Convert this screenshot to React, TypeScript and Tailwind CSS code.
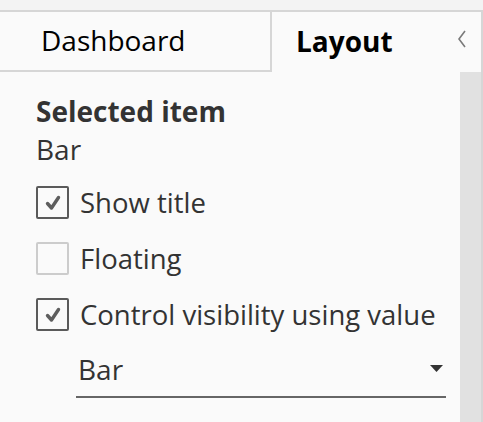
import React, { useState } from 'react'

const Check = ({ checked, onClick }: { checked: boolean; onClick: () => void }) => (
  <button
    onClick={onClick}
    className={`w-[33px] h-[33px] shrink-0 flex items-center justify-center rounded-[2px] border-2 bg-[#fafafa] ${
      checked ? 'border-[#5a5a5a]' : 'border-[#cccccc]'
    }`}
  >
    {checked && (
      <svg width="20" height="20" viewBox="0 0 20 20">
        <path d="M4.5 10.5 L8.5 15 L15.5 4.5" fill="none" stroke="#5e5e5e" strokeWidth="3.4" strokeLinecap="round" strokeLinejoin="round" />
      </svg>
    )}
  </button>
)

export default function App() {
  const [opts, setOpts] = useState({ showTitle: true, floating: false, visibility: true })

  const rows = [
    { key: 'showTitle', label: 'Show title' },
    { key: 'floating', label: 'Floating' },
    { key: 'visibility', label: 'Control visibility using value' }
  ] as const

  return (
    <div className="w-[483px] h-[422px] flex flex-col bg-[#fafafa] overflow-hidden font-['Open_Sans',sans-serif]">
      {/* top strip */}
      <div className="h-[12px] shrink-0 bg-[#f3f3f3] border-b-2 border-[#d6d6d6]" />

      <div className="flex-1 flex flex-col border-r-2 border-[#d6d6d6]">
        {/* tabs */}
        <div className="h-[60px] shrink-0 flex">
          <div className="w-[272px] flex items-center pl-[41px] pb-[3px] border-r-2 border-b-2 border-[#d6d6d6] text-[28px] text-black">
            Dashboard
          </div>
          <div className="flex-1 flex items-center justify-between pl-[24px] pr-[12px] pb-[3px] text-[28px] font-bold text-black">
            <span>Layout</span>
            <svg width="14" height="20" viewBox="0 0 14 20" className="mb-[4px]">
              <path d="M10 2 L4 10 L10 18" fill="none" stroke="#7a7a7a" strokeWidth="1.6" />
            </svg>
          </div>
        </div>

        <div className="flex-1 flex">
          {/* content */}
          <div className="flex-1 flex flex-col pl-[36px] pt-[20px]">
            <div className="text-[28px] leading-[38px] font-bold text-[#333333]">Selected item</div>
            <div className="text-[28px] leading-[38px] text-[#333333]">Bar</div>

            <div className="flex flex-col gap-[23px] mt-[18px]">
              {rows.map(r => (
                <label key={r.key} className="flex items-center gap-[11px] text-[27.5px] leading-[33px] text-[#333333]">
                  <Check checked={opts[r.key]} onClick={() => setOpts({ ...opts, [r.key]: !opts[r.key] })} />
                  <span>{r.label}</span>
                </label>
              ))}
            </div>

            <div className="ml-[40px] mt-[20px] w-[370px] h-[47px] flex items-center justify-between pl-[2px] pr-[3px] pb-[10px] border-b-2 border-[#666666] text-[28px] text-[#333333]">
              <span>Bar</span>
              <svg width="13" height="8" viewBox="0 0 13 8">
                <path d="M0 0 L13 0 L6.5 7 Z" fill="#333333" />
              </svg>
            </div>
          </div>

          {/* scrollbar track */}
          <div className="w-[21px] shrink-0 bg-[#e1e1e1]" />
        </div>
      </div>
    </div>
  )
}
